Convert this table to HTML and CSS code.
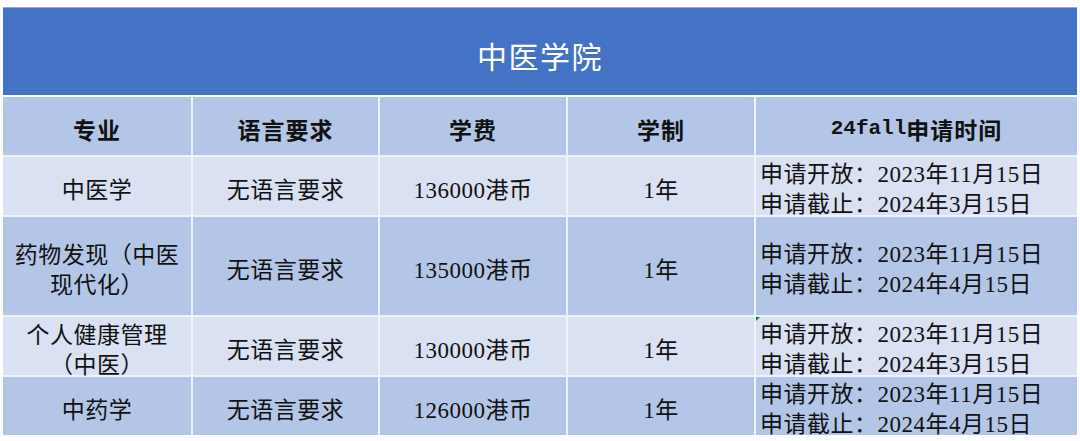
FILE: index.html
```html
<!DOCTYPE html>
<html lang="zh">
<head>
<meta charset="utf-8">
<title>中医学院</title>
<link rel="stylesheet" href="styles.css">
</head>
<body>
<div class="sheet">
  <div class="title">中医学院</div>
  <div class="grid">
    <div class="cell head">专业</div>
    <div class="cell head">语言要求</div>
    <div class="cell head">学费</div>
    <div class="cell head">学制</div>
    <div class="cell head"><span class="mono">24fall</span>申请时间</div>

    <div class="cell light">中医学</div>
    <div class="cell light">无语言要求</div>
    <div class="cell light">136000港币</div>
    <div class="cell light">1年</div>
    <div class="cell light date">申请开放：2023年11月15日<br>申请截止：2024年3月15日</div>

    <div class="cell dark">药物发现（中医<br>现代化）</div>
    <div class="cell dark">无语言要求</div>
    <div class="cell dark">135000港币</div>
    <div class="cell dark">1年</div>
    <div class="cell dark date">申请开放：2023年11月15日<br>申请截止：2024年4月15日</div>

    <div class="cell light">个人健康管理<br>（中医）</div>
    <div class="cell light">无语言要求</div>
    <div class="cell light">130000港币</div>
    <div class="cell light">1年</div>
    <div class="cell light date note">申请开放：2023年11月15日<br>申请截止：2024年3月15日</div>

    <div class="cell dark">中药学</div>
    <div class="cell dark">无语言要求</div>
    <div class="cell dark">126000港币</div>
    <div class="cell dark">1年</div>
    <div class="cell dark date">申请开放：2023年11月15日<br>申请截止：2024年4月15日</div>
  </div>
</div>
</body>
</html>
```

FILE: styles.css
```css
html, body {
  margin: 0;
  padding: 0;
  background: #ffffff;
}

.sheet {
  padding: 7px 3px 0 3px;
  font-family: "Liberation Serif", "Noto Sans CJK SC", serif;
  color: #111111;
}

.title {
  height: 88px;
  border-top: 1px solid #8eaadc;
  background: #4472c4;
  color: #ffffff;
  font-family: "Noto Sans CJK SC", sans-serif;
  font-size: 30px;
  letter-spacing: 1.5px;
  display: flex;
  align-items: center;
  justify-content: center;
  padding-top: 6px;
  box-sizing: border-box;
}

.grid {
  margin-top: 2px;
  display: grid;
  grid-template-columns: 188px 185px 186px 186px 1fr;
  grid-template-rows: 58px 58px 98px 58px 58px;
  gap: 2px;
  background: #eef2f9;
}

.cell {
  display: flex;
  align-items: center;
  justify-content: center;
  text-align: center;
  font-size: 23px;
  line-height: 30px;
  letter-spacing: 0.5px;
  padding-top: 9px;
  box-sizing: border-box;
}

.head {
  background: #b4c6e7;
  font-weight: bold;
  font-family: "Noto Sans CJK SC", sans-serif;
  letter-spacing: 1px;
  padding-top: 6px;
}

.mono {
  font-family: "Liberation Mono", monospace;
  font-size: 21px;
  letter-spacing: 0;
}

.light {
  background: #d9e1f2;
}

.dark {
  background: #b4c6e7;
}

.date {
  justify-content: flex-start;
  text-align: left;
  padding-left: 4px;
  padding-top: 8px;
  white-space: nowrap;
}

.note {
  position: relative;
}

.note::before {
  content: "";
  position: absolute;
  left: 0;
  top: 0;
  width: 0;
  height: 0;
  border-top: 4px solid #0a8a1a;
  border-right: 4px solid transparent;
}
```
